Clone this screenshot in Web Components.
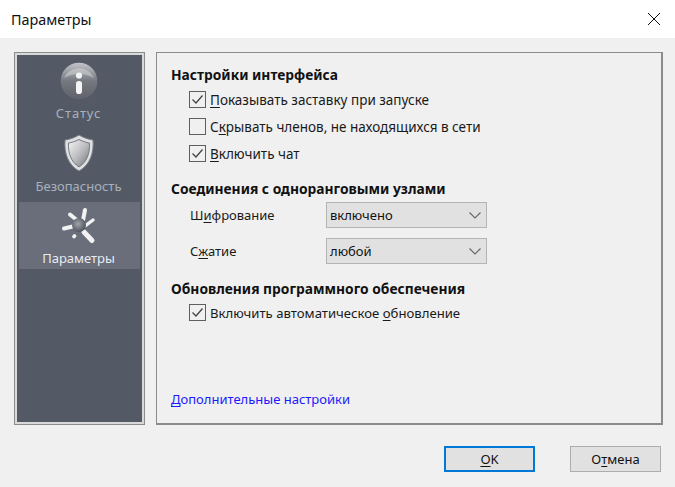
<!DOCTYPE html>
<html lang="ru">
<head>
<meta charset="utf-8">
<title>Параметры</title>
<style>
  html, body { margin: 0; padding: 0; background: #f0f0f0; }
  body { font: 13px "Noto Sans", "Open Sans", sans-serif; color: #1a1a1a; width: 675px; height: 487px; overflow: hidden; }
  u { text-underline-offset: 2px; }
</style>
</head>
<body>
<app-dialog>
  <title-bar slot="title">Параметры</title-bar>
  <side-nav slot="nav">
    <nav-item label="Статус" style="letter-spacing: .9px">
      <svg width="40" height="40" viewBox="0 0 40 40">
        <defs>
          <linearGradient id="ig" x1="0" y1="0" x2="0" y2="1"><stop offset="0" stop-color="#c2c4c9"/><stop offset=".5" stop-color="#75787f"/><stop offset="1" stop-color="#5f626a"/></linearGradient>
        </defs>
        <circle cx="20" cy="21" r="18.3" fill="url(#ig)"/>
        <path d="M5 18 A16 15 0 0 1 35 18 Q20 10 5 18Z" fill="#d5d7da" opacity=".5"/>
        <circle cx="20" cy="15.5" r="3.100" fill="#f4f4f4"/>
        <rect x="17" y="21" width="6" height="13" rx="2.800" fill="#f4f4f4"/>
      </svg>
    </nav-item>
    <nav-item label="Безопасность">
      <svg width="40" height="40" viewBox="0 0 40 40">
        <defs>
          <linearGradient id="sg" x1="0" y1="0" x2="1" y2="1"><stop offset="0" stop-color="#f6f6f6"/><stop offset=".55" stop-color="#b8b9bc"/><stop offset="1" stop-color="#6c6e74"/></linearGradient>
        </defs>
        <path d="M20 2 C25 5 30 6.500 34 7 C35 20 31 32 20 38 C9 32 5 20 6 7 C10 6.500 15 5 20 2Z" fill="#dfe0e2" stroke="#7c7e84" stroke-width="1"/>
        <path d="M20 6.500 C24 8.500 27.500 9.500 30.500 10 C31 20 28 29 20 34 C12 29 9 20 9.500 10 C12.500 9.500 16 8.500 20 6.500Z" fill="url(#sg)" stroke="#77797f" stroke-width="1"/>
      </svg>
    </nav-item>
    <nav-item label="Параметры" active>
      <svg width="40" height="40" viewBox="0 0 40 40">
        <defs>
          <radialGradient id="gg" cx=".42" cy=".42" r=".65"><stop offset="0" stop-color="#a1a4ab"/><stop offset="1" stop-color="#474b54"/></radialGradient>
        </defs>
        <g stroke="#f2f2f2" stroke-linecap="round" fill="none">
          <path d="M26 5 L23.500 18" stroke-width="4"/>
          <path d="M11 9.500 L19 16" stroke-width="4"/>
          <path d="M34 15 L26 21" stroke-width="3.400"/>
          <path d="M5 23.500 L16 21" stroke-width="4"/>
          <path d="M25 27 L33 35.500" stroke-width="5"/>
          <path d="M15.500 31 L15 31.500" stroke-width="3.800"/>
        </g>
        <circle cx="20" cy="20" r="7" fill="url(#gg)"/>
      </svg>
    </nav-item>
  </side-nav>
  <settings-panel slot="panel">
    <panel-group heading="Настройки интерфейса">
      <check-row checked><u>П</u>оказывать заставку при запуске</check-row>
      <check-row>С<u>к</u>рывать членов, не находящихся в сети</check-row>
      <check-row checked><u>В</u>ключить чат</check-row>
    </panel-group>
    <panel-group heading="Соединения с одноранговыми узлами" style="margin-bottom: 6px">
      <select-row value="включено">Ш<u>и</u>фрование</select-row>
      <select-row value="любой">С<u>ж</u>атие</select-row>
    </panel-group>
    <panel-group heading="Обновления программного обеспечения">
      <check-row checked style="font-size: 13.15px; margin-top: -1px">Включить автоматическое <u>о</u>бновление</check-row>
    </panel-group>
    <a slot="link" href="#"><u>Д</u>ополнительные настройки</a>
  </settings-panel>
  <dlg-button slot="buttons" default><u>O</u>K</dlg-button>
  <dlg-button slot="buttons">О<u>т</u>мена</dlg-button>
</app-dialog>

<script>
class AppDialog extends HTMLElement {
  constructor() {
    super();
    this.attachShadow({mode: "open"}).innerHTML = `
      <style>
        :host { display: block; width: 675px; height: 487px; }
        .body { display: flex; gap: 11px; padding: 14px 12px 0 14px; }
        .footer { display: flex; justify-content: flex-end; gap: 35px; padding: 21px 14px 0 0; }
      </style>
      <slot name="title"></slot>
      <div class="body"><slot name="nav"></slot><slot name="panel"></slot></div>
      <div class="footer"><slot name="buttons"></slot></div>
    `;
  }
}

class TitleBar extends HTMLElement {
  constructor() {
    super();
    this.attachShadow({mode: "open"}).innerHTML = `
      <style>
        :host { display: flex; align-items: center; justify-content: space-between; height: 38px; background: #fff; padding: 0 14px 0 11px; font-size: 14.4px; color: #111; }
        svg { display: block; }
      </style>
      <slot></slot>
      <svg width="14" height="14" viewBox="0 0 14 14"><path d="M1 1L13 13M13 1L1 13" stroke="#111" stroke-width="1" fill="none"/></svg>
    `;
  }
}

class SideNav extends HTMLElement {
  constructor() {
    super();
    this.attachShadow({mode: "open"}).innerHTML = `
      <style>
        :host { display: block; box-sizing: border-box; width: 131px; height: 373px; background: #535a66; border: 1px solid #8b8b8b; outline: 2px solid #d9d9d9; outline-offset: -3px; padding: 3px 4px; }
      </style>
      <slot></slot>
    `;
  }
}

class NavItem extends HTMLElement {
  constructor() {
    super();
    const label = this.getAttribute("label");
    this.attachShadow({mode: "open"}).innerHTML = `
      <style>
        :host { display: flex; flex-direction: column; align-items: center; height: 72.5px; padding: 4px 2px 0 0; box-sizing: border-box; color: #a9b0bd; font-size: 13px; }
        :host([active]) { background: #6a6e7a; color: #e8ebf2; height: 67px; margin-top: 1px; padding-top: 3px; }
        .icon { height: 40px; display: flex; }
        .label { margin-top: 4px; line-height: 18px; }
      </style>
      <div class="icon"><slot></slot></div>
      <div class="label">${label}</div>
    `;
  }
}

class SettingsPanel extends HTMLElement {
  constructor() {
    super();
    this.attachShadow({mode: "open"}).innerHTML = `
      <style>
        :host { display: flex; flex-direction: column; box-sizing: border-box; width: 507px; height: 373px; border: 1px solid #8b8b8b; border-width: 1px 2px 2px 1px; padding: 13px 0 0 14px; }
        .link { margin-top: auto; padding-bottom: 15px; }
        ::slotted(a) { color: #1a1aff; text-decoration: none; }
      </style>
      <slot></slot>
      <div class="link"><slot name="link"></slot></div>
    `;
  }
}

class PanelGroup extends HTMLElement {
  constructor() {
    super();
    const heading = this.getAttribute("heading");
    this.attachShadow({mode: "open"}).innerHTML = `
      <style>
        :host { display: block; margin-bottom: 13px; }
        h2 { margin: 0 0 2px; font-size: 13.8px; line-height: 18px; font-weight: 700; color: #111; }
      </style>
      <h2>${heading}</h2>
      <slot></slot>
    `;
  }
}

class CheckRow extends HTMLElement {
  constructor() {
    super();
    const mark = this.hasAttribute("checked")
      ? '<svg width="15" height="15" viewBox="0 0 15 15"><path d="M2.500 7.500L6 11L12.500 3.500" stroke="#444" stroke-width="1.300" fill="none"/></svg>'
      : "";
    this.attachShadow({mode: "open"}).innerHTML = `
      <style>
        :host { display: flex; align-items: center; gap: 4px; height: 27px; padding-left: 18px; font-size: 13.5px; }
        .box { box-sizing: border-box; width: 17px; height: 17px; border: 1px solid #5f5f5f; background: #f0f0f0; display: flex; }
      </style>
      <div class="box">${mark}</div>
      <span><slot></slot></span>
    `;
  }
}

class SelectRow extends HTMLElement {
  constructor() {
    super();
    const value = this.getAttribute("value");
    this.attachShadow({mode: "open"}).innerHTML = `
      <style>
        :host { display: flex; align-items: center; height: 26px; margin: 4px 0 10px; padding-left: 19px; }
        .label { width: 136px; }
        .combo { box-sizing: border-box; width: 161px; height: 26px; display: flex; align-items: center; justify-content: space-between; padding: 0 4px 0 3px; background: #e1e1e1; border: 1px solid #b4b4b4; color: #111; }
        svg { display: block; }
      </style>
      <span class="label"><slot></slot></span>
      <div class="combo"><span>${value}</span>
        <svg width="14" height="14" viewBox="0 0 14 14"><path d="M1.500 4.500L7 10L12.500 4.500" stroke="#666" stroke-width="1.100" fill="none"/></svg>
      </div>
    `;
  }
}

class DlgButton extends HTMLElement {
  constructor() {
    super();
    this.attachShadow({mode: "open"}).innerHTML = `
      <style>
        :host { display: flex; align-items: center; justify-content: center; box-sizing: border-box; width: 91px; height: 26px; background: #e1e1e1; border: 1px solid #adadad; color: #111; }
        :host([default]) { border: 2px solid #0078d7; }
      </style>
      <slot></slot>
    `;
  }
}

customElements.define("app-dialog", AppDialog);
customElements.define("title-bar", TitleBar);
customElements.define("side-nav", SideNav);
customElements.define("nav-item", NavItem);
customElements.define("settings-panel", SettingsPanel);
customElements.define("panel-group", PanelGroup);
customElements.define("check-row", CheckRow);
customElements.define("select-row", SelectRow);
customElements.define("dlg-button", DlgButton);
</script>
</body>
</html>
